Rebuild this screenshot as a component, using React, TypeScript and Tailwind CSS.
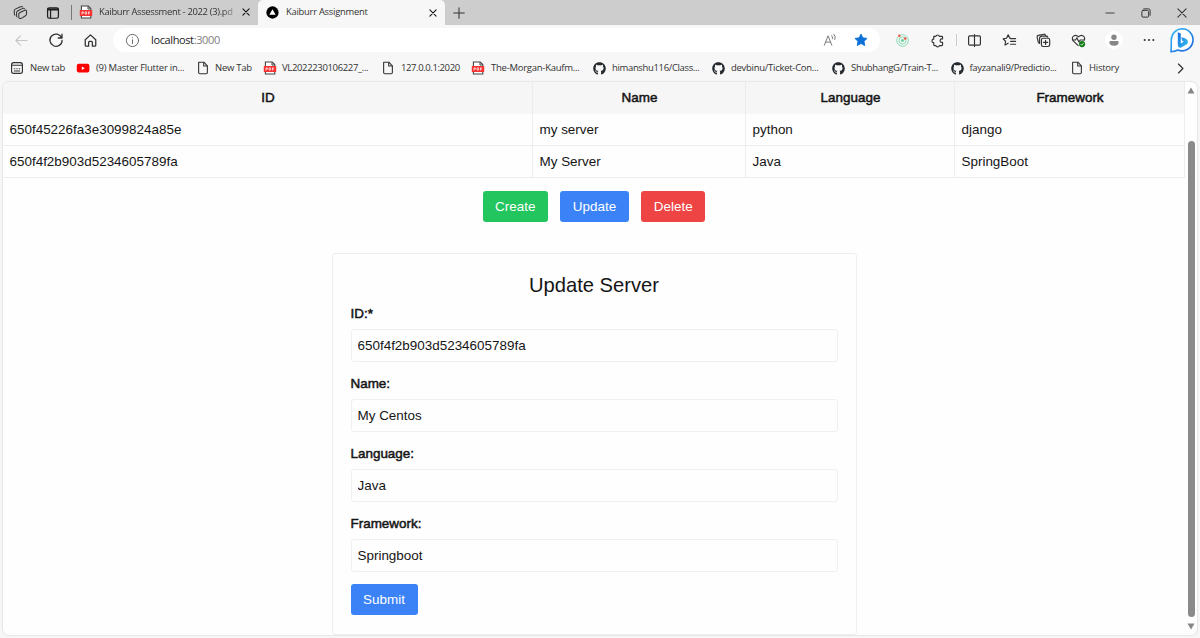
import React, { ReactNode } from "react";
import { FaGithub } from "react-icons/fa";

const UI = "font-['Open_Sans','Noto_Sans',sans-serif]";

function Stroke({ className, children, w = 1 }: { className: string; children: ReactNode; w?: number }) {
  return (
    <svg
      viewBox="0 0 16 16"
      className={`shrink-0 ${className}`}
      fill="none"
      stroke="currentColor"
      strokeWidth={w}
      strokeLinecap="round"
      strokeLinejoin="round"
    >
      {children}
    </svg>
  );
}

function PdfIcon() {
  return (
    <svg viewBox="0 0 14 14" className="size-[14px] shrink-0">
      <path d="M2.4 13V1H9.2L11.8 3.6V13Z" fill="#fff" stroke="#444" strokeWidth="1.1" />
      <path d="M9 1.2V4H11.6" fill="none" stroke="#444" />
      <rect x="0.8" y="5" width="12.4" height="6" rx="0.6" fill="#f53232" />
      <path
        d="M3 9.4V6.9H4.4V8.1H3M6.1 6.9V9.1H7.6V6.9ZM9.5 9.4V6.9H11M9.5 8.1H10.8"
        fill="none"
        stroke="#fff"
        strokeWidth="0.7"
      />
    </svg>
  );
}

function PageIcon() {
  return (
    <Stroke className="size-[14px] text-[#333]" w={1.25}>
      <path d="M3 1.4H9L13 5.6V13.2Q13 14.6 11.6 14.6H4.4Q3 14.6 3 13.2Z" />
      <path d="M8.8 1.8V5.8H12.8" />
    </Stroke>
  );
}

function NewTabIcon() {
  return (
    <Stroke className="size-[14px] text-[#333]" w={1.3}>
      <rect x="1.8" y="1.8" width="12.4" height="12.4" rx="2.4" />
      <path d="M2 4.8H14M5 8.8H5.5M7.8 8.8H8.3M10.6 8.8H11.1M5 11.4H11" />
    </Stroke>
  );
}

function YoutubeIcon() {
  return (
    <svg viewBox="0 0 14 14" className="size-[14px] shrink-0">
      <rect x="0.8" y="2.8" width="12.6" height="8.8" rx="2" fill="#f00" />
      <path d="M5.8 5.4V9L8.8 7.2Z" fill="#fff" />
    </svg>
  );
}

function GitIcon() {
  return <FaGithub className="size-[13px] shrink-0 text-[#24292f]" />;
}

const bookmarks: { label: string; icon: ReactNode; box: string }[] = [
  { label: "New tab", icon: <NewTabIcon />, box: "w-[66px] gap-[6px] tracking-[-0.25px]" },
  { label: "(9) Master Flutter in...", icon: <YoutubeIcon />, box: "w-[120px] gap-[6px] tracking-[-0.25px]" },
  { label: "New Tab", icon: <PageIcon />, box: "w-[67px] gap-[5px] tracking-[-0.25px]" },
  { label: "VL2022230106227_...", icon: <PdfIcon />, box: "w-[118px] gap-[5px] tracking-[-0.35px]" },
  { label: "127.0.0.1:2020", icon: <PageIcon />, box: "w-[90px] gap-[6px] tracking-[-0.4px]" },
  { label: "The-Morgan-Kaufm...", icon: <PdfIcon />, box: "w-[122px] gap-[6px] tracking-[-0.25px]" },
  { label: "himanshu116/Class...", icon: <GitIcon />, box: "w-[119px] gap-[6px] tracking-[-0.35px]" },
  { label: "devbinu/Ticket-Con...", icon: <GitIcon />, box: "w-[120px] gap-[6px] tracking-[-0.27px]" },
  { label: "ShubhangG/Train-T...", icon: <GitIcon />, box: "w-[118.5px] gap-[6px] tracking-[-0.33px]" },
  { label: "fayzanali9/Predictio...", icon: <GitIcon />, box: "w-[119px] gap-[6px] tracking-[-0.33px]" },
  { label: "History", icon: <PageIcon />, box: "w-[60px] gap-[5.5px] tracking-[-0.25px]" },
];

function TabStrip() {
  return (
    <div className="flex h-[25px] items-center bg-[#cdcdcd] text-[#333]">
      <Stroke className="ml-[13px] size-[15px]" w={1.1}>
        <path d="M7 8.2L12.6 5.6Q14.4 5 14.4 6.6V9.6Q14.4 10.6 13.6 11.2L9 14.2Q6.4 15.2 6.2 12.8V9.8Q6.2 8.6 7 8.2Z" />
        <path d="M4.4 12.8Q3.6 12 3.8 10.6V8.2Q3.8 7 4.8 6.4L10.4 3.6Q11.6 3.2 12.2 4" />
        <path d="M2 10.8Q1.2 10 1.4 8.6V6.2Q1.4 5 2.4 4.4L8 1.8Q9.2 1.2 10 2" />
      </Stroke>
      <Stroke className="ml-[18px] size-[14px] text-[#1d1d1d]" w={1.4}>
        <rect x="1.8" y="2" width="12.4" height="12" rx="2" />
        <path d="M2 3.2H14M2 4.4H14M5.2 5V13.6" />
      </Stroke>
      <div className="ml-[11px] h-[15px] w-px bg-[#777]" />
      <div className="ml-[7px] flex w-[179px] items-center">
        <PdfIcon />
        <span className="ml-[6px] w-[140px] text-[9.4px] tracking-[-0.31px] whitespace-nowrap [mask-image:linear-gradient(to_right,black_88%,transparent)]">
          Kaiburr Assessment - 2022 (3).pd
        </span>
        <Stroke className="ml-[2px] size-[10px] text-[#111]" w={1.7}>
          <path d="M3 3L13 13M13 3L3 13" />
        </Stroke>
      </div>
      <div className="flex h-[25px] w-[187px] items-center rounded-t-[5px] bg-[#f7f7f7] pl-[8px]">
        <svg viewBox="0 0 14 14" className="size-[13px] shrink-0">
          <circle cx="7" cy="7" r="6.6" fill="#000" />
          <path d="M7 3.6L10.4 9.4H3.6Z" fill="#fff" />
        </svg>
        <span className="ml-[7px] w-[142px] text-[9.4px] tracking-[-0.25px] whitespace-nowrap">Kaiburr Assignment</span>
        <Stroke className="size-[10px] text-[#111]" w={1.7}>
          <path d="M3 3L13 13M13 3L3 13" />
        </Stroke>
      </div>
      <Stroke className="ml-[7px] size-[14px]" w={1.2}>
        <path d="M8 2V14M2 8H14" />
      </Stroke>
      <div className="ml-auto flex items-center pr-[12px]">
        <Stroke className="size-[12px]" w={1.2}>
          <path d="M2.5 8H13.5" />
        </Stroke>
        <Stroke className="ml-[24px] size-[12px]" w={1.3}>
          <rect x="2.5" y="4.5" width="9" height="9" rx="1.5" />
          <path d="M5 2.5H11.5Q13.5 2.5 13.5 4.5V11" />
        </Stroke>
        <Stroke className="ml-[24px] size-[12px]" w={1.4}>
          <path d="M2.5 2.5L13.5 13.5M13.5 2.5L2.5 13.5" />
        </Stroke>
      </div>
    </div>
  );
}

function Toolbar() {
  return (
    <div className="flex h-[30px] items-center text-[#333]">
      <Stroke className="ml-[14px] size-[15px] text-[#c6c6c6]" w={1.2}>
        <path d="M14 8H2M7 3L2 8L7 13" />
      </Stroke>
      <Stroke className="ml-[19px] size-[16px]" w={1.3}>
        <path d="M13.7 6A6.1 6.1 0 1 0 14.1 8.4M14 2.2V6H10.2" />
      </Stroke>
      <Stroke className="ml-[19px] size-[15px]" w={1.35}>
        <path d="M2.4 7.2L8 2L13.6 7.2V13Q13.6 14 12.6 14H10V10Q10 9 9 9H7Q6 9 6 10V14H3.4Q2.4 14 2.4 13Z" />
      </Stroke>
      <div className="ml-[15px] flex h-[24px] w-[767px] items-center rounded-full bg-white">
        <Stroke className="ml-[12px] size-[15px] text-[#666]" w={1.05}>
          <circle cx="8" cy="8" r="6.5" />
          <path d="M8 7.3V11.2M8 5V5.1" />
        </Stroke>
        <span className="ml-[11px] text-[11px] tracking-[-0.38px] whitespace-nowrap text-[#222]">
          localhost<span className="text-[#808080]">:3000</span>
        </span>
        <Stroke className="ml-auto size-[14px] text-[#777]" w={1.1}>
          <path d="M1.5 14L5.8 3.2L10.1 14M3 10.4H8.6M10 3Q11.4 4.6 10.8 6.6M12.4 1.4Q15 4 13.6 7.4" />
        </Stroke>
        <svg viewBox="0 0 16 16" className="mr-[12px] ml-[17px] size-[14px] shrink-0">
          <path
            d="M8 1.2L10.1 5.5L14.9 6.2L11.4 9.5L12.3 14.3L8 12L3.7 14.3L4.6 9.5L1.1 6.2L5.9 5.5Z"
            fill="#0c70d6"
            stroke="#0c70d6"
            strokeLinejoin="round"
          />
        </svg>
      </div>
      <svg viewBox="0 0 16 16" className="ml-[15px] size-[15px] shrink-0" fill="none" stroke="#83dbb0">
        <circle cx="8" cy="8" r="6.2" />
        <circle cx="8" cy="8" r="3.8" />
        <circle cx="8" cy="8" r="1.3" fill="#56c990" />
        <circle cx="4.6" cy="3" r="1.3" fill="#ef5545" stroke="none" />
        <circle cx="10.9" cy="5.9" r="1.4" fill="#ef5545" stroke="none" />
      </svg>
      <Stroke className="ml-[19.5px] size-[15px]" w={1.25}>
        <path d="M4 3.6H6.3A1.9 1.9 0 0 1 10 3.6H12.7Q13.4 3.6 13.4 4.4V6.3H12.6A1.8 1.8 0 0 0 12.6 10H13.4V12.6Q13.4 13.4 12.6 13.4H10A1.9 1.9 0 0 1 6.3 13.4H4.8Q4 13.4 4 12.6V10.3A1.9 1.9 0 0 1 4 6.5Z" />
      </Stroke>
      <div className="ml-[11px] h-[12px] w-px bg-[#ccc]" />
      <Stroke className="ml-[10.5px] size-[15px]" w={1.25}>
        <path d="M6 3H3Q1.7 3 1.7 4.3V11.7Q1.7 13 3 13H8M8 3H13Q14.3 3 14.3 4.3V11.7Q14.3 13 13 13H8M6 3H8M8 1.6V14.4" />
      </Stroke>
      <Stroke className="ml-[19.5px] size-[15px]" w={1.25}>
        <path d="M9.2 5.6H8.4L6.6 2L4.8 5.6L1.2 6.2L3.8 8.8L3.2 12.8L6.6 11M9.2 6H14.5M9.2 9H14.5M9.2 12H14.5" />
      </Stroke>
      <Stroke className="ml-[19.5px] size-[15px]" w={1.25}>
        <rect x="5.8" y="5.6" width="8.8" height="8.8" rx="1.8" />
        <path d="M10.2 7.8V12.2M8 10H12.4M3.8 11.2Q2.7 10.9 2.4 9.8L1.2 4.4Q1 3 2.4 2.6L8.4 1.3Q9.7 1.1 10.2 2.6M3.8 11.2V6.2Q3.8 3.5 6.4 3.4H11Q12.4 3.4 12.6 4.4" />
      </Stroke>
      <svg viewBox="0 0 16 16" className="ml-[19.5px] size-[15px] shrink-0" fill="none" stroke="#333" strokeWidth="1.2" strokeLinejoin="round">
        <path d="M8 13.8L2.6 8.6Q0.6 6.2 2 4Q4.6 1 8 4Q11.4 1 14 4Q15.2 6 13.8 8.2" />
        <path d="M1.4 7.4H4.8L6.3 5L8.4 9.6L9.8 7.4H14" />
        <circle cx="11.8" cy="11.8" r="3.3" fill="#137a17" stroke="none" />
        <path d="M10.3 11.9L11.4 13L13.4 10.8" stroke="#fff" strokeWidth="0.9" />
      </svg>
      <div className="ml-[19px] flex size-[18px] shrink-0 items-center justify-center rounded-full bg-white">
        <svg viewBox="0 0 12 12" className="size-[12px]" fill="#868686">
          <circle cx="6" cy="3.2" r="2.7" />
          <path d="M1.4 8.2Q1.4 7 2.6 7H9.4Q10.6 7 10.6 8.2Q10.4 11.7 6 11.7Q1.6 11.7 1.4 8.2Z" />
        </svg>
      </div>
      <svg viewBox="0 0 12 4" className="ml-[20.5px] h-[4px] w-[12px] shrink-0" fill="#333">
        <circle cx="1.7" cy="2" r="1.05" />
        <circle cx="6" cy="2" r="1.05" />
        <circle cx="10.3" cy="2" r="1.05" />
      </svg>
      <svg viewBox="0 0 26 26" className="ml-[13.5px] size-[26px] shrink-0">
        <defs>
          <linearGradient id="ring" x1="0" y1="0" x2="1" y2="1">
            <stop offset="0" stopColor="#37bdf5" />
            <stop offset="1" stopColor="#1b60dc" />
          </linearGradient>
          <linearGradient id="bee" x1="0" y1="0" x2="1" y2="1">
            <stop offset="0" stopColor="#1769e0" />
            <stop offset="1" stopColor="#35c4ef" />
          </linearGradient>
        </defs>
        <path
          d="M13.3 1.8A11 11 0 1 1 8.9 23Q6.2 24.4 2 24.8Q2.3 20.8 2.3 13A11 11 0 0 1 13.3 1.8Z"
          fill="#fff"
          stroke="url(#ring)"
          strokeWidth="1.6"
        />
        <path
          d="M8.8 5.2L11.8 6.4V16.4L14.8 14.8L13.2 13.8L12.2 10.2Q19 11.4 19 15Q18.8 16.6 17.5 17.4L12.2 20.4Q10.8 21 9.8 20.2Q8.8 19.4 8.8 17.8Z"
          fill="url(#bee)"
        />
      </svg>
    </div>
  );
}

function BookmarkBar() {
  return (
    <div className="flex h-[27px] items-center pb-px pl-[10px] text-[#333]">
      {bookmarks.map((b) => (
        <div key={b.label} className={`flex shrink-0 items-center text-[9.5px] whitespace-nowrap ${b.box}`}>
          {b.icon}
          <span>{b.label}</span>
        </div>
      ))}
      <Stroke className="mr-[13px] ml-auto size-[13px]" w={1.5}>
        <path d="M5.5 2.5L11 8L5.5 13.5" />
      </Stroke>
    </div>
  );
}

const servers = [
  ["650f45226fa3e3099824a85e", "my server", "python", "django"],
  ["650f4f2b903d5234605789fa", "My Server", "Java", "SpringBoot"],
];

const fields = [
  { label: "ID:*", value: "650f4f2b903d5234605789fa" },
  { label: "Name:", value: "My Centos" },
  { label: "Language:", value: "Java" },
  { label: "Framework:", value: "Springboot" },
];

const HEAVY = "[-webkit-text-stroke:0.5px_#151515]";
const COLS = "grid grid-cols-[530px_213px_209px_1fr]";

function Button({ className, children }: { className: string; children: ReactNode }) {
  return (
    <button className={`h-[31px] rounded-[3px] pt-px text-center text-[13.45px] leading-[30px] text-white ${className}`}>
      {children}
    </button>
  );
}

function ServerPage() {
  return (
    <main className="flex w-[1182px] shrink-0 flex-col items-center font-['Liberation_Sans',Arial,sans-serif] text-[13.45px] text-[#151515]">
      <div className="w-full border-r border-[#ededed]">
        <div className={`${COLS} h-[32px] bg-[#f6f6f6]`}>
          {["ID", "Name", "Language", "Framework"].map((h) => (
            <div
              key={h}
              className={`flex items-center justify-center border-r border-[#ececec] pt-px pl-px last:border-r-0 ${HEAVY}`}
            >
              {h}
            </div>
          ))}
        </div>
        {servers.map((row) => (
          <div key={row[0]} className={`${COLS} h-[32px] border-b border-[#eeeeee]`}>
            {row.map((cell) => (
              <div
                key={cell}
                className="flex items-center border-r border-[#eeeeee] pt-[2px] pl-[6.5px] last:border-r-0"
              >
                {cell}
              </div>
            ))}
          </div>
        ))}
      </div>
      <div className="mt-[13px] flex gap-[12.5px]">
        <Button className="w-[65px] bg-[#22c55e]">Create</Button>
        <Button className="w-[68.5px] bg-[#3b82f6]">Update</Button>
        <Button className="w-[64px] bg-[#ef4444]">Delete</Button>
      </div>
      <form className="mt-[31px] flex h-[382px] w-[525px] flex-col rounded-[3px] border border-[#eeeeee] px-[18px] pt-[18px]">
        <h2 className="h-[28px] text-center text-[20.2px] leading-[26px]">Update Server</h2>
        {fields.map((f) => (
          <label key={f.label} className="mb-[13px] flex flex-col gap-[9px]">
            <span className={`h-[20px] leading-[28px] ${HEAVY}`}>{f.label}</span>
            <input
              readOnly
              value={f.value}
              className="-mb-[5px] h-[33px] w-[487px] rounded-[3px] border border-[#f0f0f0] px-[6px] outline-none"
            />
          </label>
        ))}
        <Button className="mt-[4px] w-[67px] bg-[#3b82f6]">Submit</Button>
      </form>
    </main>
  );
}

function Scrollbar() {
  return (
    <div className="flex w-[12px] flex-col items-center pt-[5px] pb-[4px]">
      <svg viewBox="0 0 8 7" className="h-[7px] w-[8px]" fill="#858585">
        <path d="M4 0.5L7.5 6.5H0.5Z" />
      </svg>
      <div className="mt-[47px] h-[476px] w-[7px] rounded-full bg-[#8a8a8a]" />
      <svg viewBox="0 0 8 7" className="mt-[6px] h-[7px] w-[8px]" fill="#858585">
        <path d="M4 6.5L7.5 0.5H0.5Z" />
      </svg>
    </div>
  );
}

export default function App() {
  return (
    <div className={`flex h-[638px] w-[1200px] flex-col overflow-hidden bg-[#f7f7f7] ${UI}`}>
      <TabStrip />
      <Toolbar />
      <BookmarkBar />
      <div className="mx-[3px] flex h-[553px] overflow-hidden rounded-[6px] bg-[#fefefe] shadow-[0_0_1px_1px_#e6e6e6]">
        <ServerPage />
        <Scrollbar />
      </div>
    </div>
  );
}
